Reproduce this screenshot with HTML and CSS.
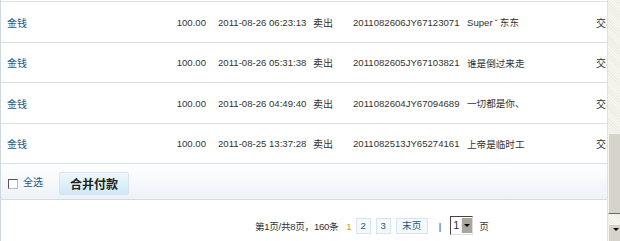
FILE: index.html
```html
<!DOCTYPE html>
<html lang="zh-CN">
<head>
  <meta charset="UTF-8">
  <title>交易记录</title>
  <link rel="stylesheet" href="styles.css">
</head>
<body>
  <div class="frame">
    <div class="panel">
      <div class="records">
        <div class="row">
          <span class="c-name"><a href="#">金钱</a></span>
          <span class="c-amount">100.00</span>
          <span class="c-date">2011-08-26 06:23:13</span>
          <span class="c-type">卖出</span>
          <span class="c-id">2011082606JY67123071</span>
          <span class="c-buyer">Super<span class="tilde">ˇ</span>东东</span>
          <span class="c-status">交易成功</span>
        </div>
        <div class="row">
          <span class="c-name"><a href="#">金钱</a></span>
          <span class="c-amount">100.00</span>
          <span class="c-date">2011-08-26 05:31:38</span>
          <span class="c-type">卖出</span>
          <span class="c-id">2011082605JY67103821</span>
          <span class="c-buyer">谁是倒过来走</span>
          <span class="c-status">交易成功</span>
        </div>
        <div class="row">
          <span class="c-name"><a href="#">金钱</a></span>
          <span class="c-amount">100.00</span>
          <span class="c-date">2011-08-26 04:49:40</span>
          <span class="c-type">卖出</span>
          <span class="c-id">2011082604JY67094689</span>
          <span class="c-buyer">一切都是你、</span>
          <span class="c-status">交易成功</span>
        </div>
        <div class="row">
          <span class="c-name"><a href="#">金钱</a></span>
          <span class="c-amount">100.00</span>
          <span class="c-date">2011-08-25 13:37:28</span>
          <span class="c-type">卖出</span>
          <span class="c-id">2011082513JY65274161</span>
          <span class="c-buyer">上帝是临时工</span>
          <span class="c-status">交易成功</span>
        </div>
      </div>

      <div class="toolbar">
        <label class="select-all"><span class="box"></span>全选</label>
        <button class="merge-btn">合并付款</button>
      </div>

      <div class="pager">
        <span class="summary">第1页/共8页，160条</span>
        <span class="current">1</span>
        <a class="page" href="#">2</a>
        <a class="page" href="#">3</a>
        <a class="page last" href="#">末页</a>
        <span class="sep">|</span>
        <span class="jump"><span class="jump-val">1</span><span class="jump-arrow"></span></span>
        <span class="unit">页</span>
      </div>
    </div>

    <div class="scrollbar">
      <div class="track"></div>
      <div class="thumb"></div>
      <div class="track short"></div>
      <div class="arrow-btn"><span class="arrow-down"></span></div>
    </div>
  </div>
</body>
</html>
```

FILE: styles.css
```css
html, body {
  margin: 0;
  padding: 0;
  background: #fff;
  overflow: hidden;
}
body {
  font-family: "Liberation Sans", Arial, "Noto Sans CJK SC", sans-serif;
  font-size: 9.6px;
  color: #333;
}
.frame {
  display: flex;
  width: 620px;
  height: 241px;
}
.panel {
  width: 606px;
  flex: none;
  border-left: 1px solid #cdd8e2;
  overflow: hidden;
}
.records {
  margin-top: 1px;
  border-top: 1px solid #dbe3ea;
}
.row {
  display: flex;
  align-items: center;
  border-bottom: 1px solid #d6dee6;
  box-sizing: border-box;
  white-space: nowrap;
}
.row:nth-child(odd) { height: 41px; }
.row:nth-child(even) { height: 40px; }
.row > span {
  flex: none;
  box-sizing: border-box;
  overflow: hidden;
}
.row a {
  color: #2b5783;
  text-decoration: none;
  font-size: 10px;
}
.c-name { width: 150px; padding-left: 6px; }
.c-amount { width: 55px; text-align: right; }
.c-date { width: 107px; padding-left: 12px; }
.c-type { width: 40px; font-size: 10px; }
.c-id { width: 114px; }
.c-buyer { width: 129px; }
.c-status { width: 60px; font-size: 10px; }
.tilde { padding: 0 2px; }

.toolbar {
  display: flex;
  align-items: center;
  height: 36px;
  box-sizing: border-box;
  padding: 4px 0 0 7px;
  background: linear-gradient(#ffffff, #edf2f7);
  border-bottom: 1px solid #d3dbe3;
}
.select-all {
  display: flex;
  align-items: center;
  color: #2b5783;
  font-size: 10px;
  margin-top: -4px;
}
.box {
  width: 8px;
  height: 8px;
  border: 1px solid #555;
  border-right-color: #bbb;
  border-bottom-color: #bbb;
  background: #fff;
  margin: 4px 5px 0 0;
}
.merge-btn {
  margin-left: 16px;
  width: 70px;
  height: 23px;
  border: 1px solid #d3e6ef;
  border-radius: 2px;
  background: linear-gradient(#eef8fc, #cfe9f5);
  font-family: "Noto Sans CJK SC", sans-serif;
  font-weight: bold;
  font-size: 12px;
  color: #222;
  padding: 0;
}

.pager {
  display: flex;
  align-items: center;
  height: 52px;
  padding-left: 254px;
  color: #333;
}
.summary { letter-spacing: -0.3px; }
.current {
  color: #d9931b;
  margin: 0 4px 0 8px;
}
.page {
  display: inline-block;
  height: 14px;
  width: 13px;
  text-align: center;
  border: 1px solid #d6e4ee;
  background: #f4f9fc;
  color: #2b5783;
  text-decoration: none;
  margin-right: 5px;
  line-height: 14px;
}
.page.last { width: 30px; }
.sep {
  margin: 0 9px 0 6px;
  color: #333;
}
.jump {
  display: flex;
  align-items: center;
  width: 21px;
  height: 17px;
  border: 1px solid #444;
  border-right-color: #ddd;
  border-bottom-color: #ddd;
  background: #fff;
  font-size: 11px;
  margin-top: -2px;
}
.jump-val { flex: 1; padding-left: 2px; }
.jump-arrow {
  width: 10px;
  height: 15px;
  background: #aaa69e;
  border-left: 1px solid #eee;
  position: relative;
}
.jump-arrow::after {
  content: "";
  position: absolute;
  left: 2px;
  top: 6px;
  border-left: 3px solid transparent;
  border-right: 3px solid transparent;
  border-top: 3px solid #000;
}
.unit { margin-left: 6px; }

.scrollbar {
  width: 14px;
  flex: none;
  display: flex;
  flex-direction: column;
  border-left: 1px solid #e2e0d8;
  background: repeating-linear-gradient(45deg, #eeede6 0 1px, #f6f5f0 1px 2px);
}
.track { height: 138px; }
.track.short { height: 9px; }
.thumb {
  height: 84px;
  background: #d6d3ca;
  border: 1px solid #f4f3ee;
  border-right-color: #6f6c66;
  border-bottom-color: #6f6c66;
  box-sizing: border-box;
}
.arrow-btn {
  height: 14px;
  margin-top: 1px;
  background: #d6d3ca;
  border-top: 1px solid #f4f3ee;
  border-left: 1px solid #f4f3ee;
  display: flex;
  justify-content: center;
  padding-top: 3px;
}
.arrow-down {
  width: 0;
  height: 0;
  border-left: 3px solid transparent;
  border-right: 3px solid transparent;
  border-top: 3px solid #000;
}
```
